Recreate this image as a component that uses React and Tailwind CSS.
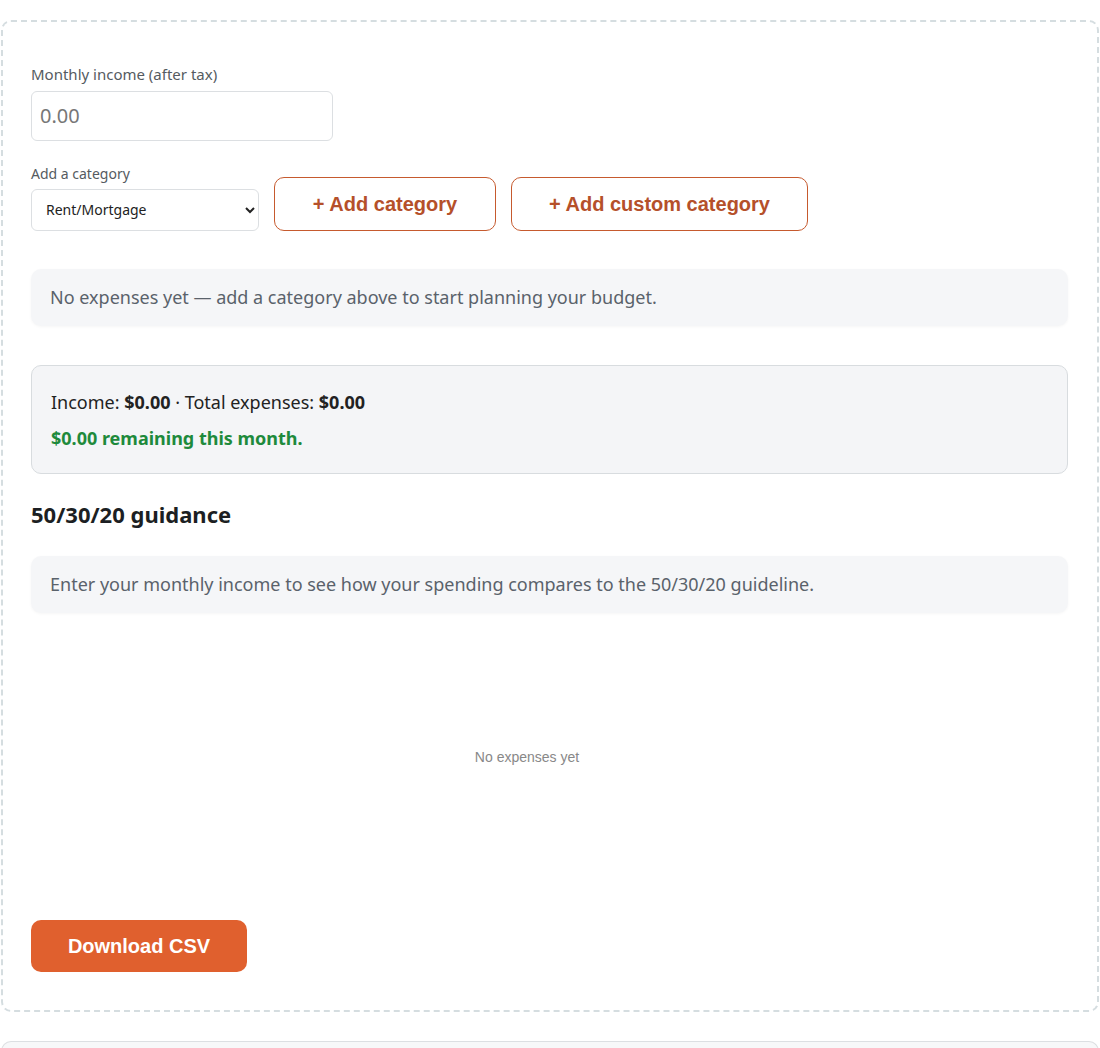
export default function App() {
  return (
    <div className="min-h-screen bg-white pt-5 font-['Noto_Sans',sans-serif]">
      <section className="mx-px rounded-[10px] border-2 border-dashed border-[#d5dde0] pl-[28px] pr-[29px] pt-[41px] pb-[38px]">
        {/* Income */}
        <label className="block text-[15px] text-[#555b61]">Monthly income (after tax)</label>
        <input
          type="text"
          placeholder="0.00"
          className="mt-[5px] block h-[50px] w-[302px] rounded-md border border-[#dcdfe2] px-2 text-[20px] text-[#333] placeholder:text-[#777]"
        />

        {/* Add a category */}
        <div className="mt-[22px] flex items-end gap-[15px]">
          <div className="flex flex-col">
            <label className="text-[14px] text-[#555b61]">Add a category</label>
            <select className="mt-[5px] h-[42px] w-[228px] rounded-md border border-[#dcdfe2] bg-white pl-[10px] pr-2 text-[14px] text-[#222]">
              <option>Rent/Mortgage</option>
              <option>Groceries</option>
              <option>Utilities</option>
              <option>Transport</option>
            </select>
          </div>
          <button className="h-[54px] w-[222px] rounded-[10px] border border-[#c65a2e] bg-white font-['Liberation_Sans',sans-serif] text-[20px] font-bold text-[#b5502a]">
            + Add category
          </button>
          <button className="h-[54px] w-[297px] rounded-[10px] border border-[#c65a2e] bg-white font-['Liberation_Sans',sans-serif] text-[20px] font-bold text-[#b5502a]">
            + Add custom category
          </button>
        </div>

        {/* Empty expenses */}
        <div className="mt-[38px] flex h-[57px] items-center rounded-[10px] bg-[#f5f6f8] px-[19px] text-[18px] text-[#5a626b] shadow-[0_1px_3px_rgba(0,0,0,0.04)]">
          No expenses yet — add a category above to start planning your budget.
        </div>

        {/* Summary */}
        <div className="mt-[39px] flex h-[109px] flex-col justify-center gap-[9px] rounded-[10px] border border-[#d8dcdf] bg-[#f4f5f7] px-[19px] pt-[3px] text-[18px] text-[#222]">
          <p>
            Income: <b>$0.00</b> · Total expenses: <b>$0.00</b>
          </p>
          <p className="font-bold text-[#1e8a3c]">$0.00 remaining this month.</p>
        </div>

        {/* Guidance */}
        <h2 className="mt-[24px] text-[22px] font-bold text-[#1c1f23]">50/30/20 guidance</h2>
        <div className="mt-[25px] flex h-[57px] items-center rounded-[10px] bg-[#f5f6f8] px-[19px] text-[18px] text-[#5a626b] shadow-[0_1px_3px_rgba(0,0,0,0.04)]">
          Enter your monthly income to see how your spending compares to the 50/30/20 guideline.
        </div>

        {/* Chart placeholder */}
        <div className="mt-[25px] flex h-[240px] w-[992px] items-center justify-center font-['Liberation_Sans',sans-serif] text-[14px] text-[#888]">
          No expenses yet
        </div>

        <button className="mt-[42px] h-[52px] w-[216px] rounded-[10px] bg-[#e0602e] font-['Liberation_Sans',sans-serif] text-[20px] font-bold text-white">
          Download CSV
        </button>
      </section>

      <div className="mx-px mt-[29px] h-[40px] rounded-t-[10px] border border-b-0 border-[#dcdfe2] bg-[#f7f8f9]" />
    </div>
  );
}
